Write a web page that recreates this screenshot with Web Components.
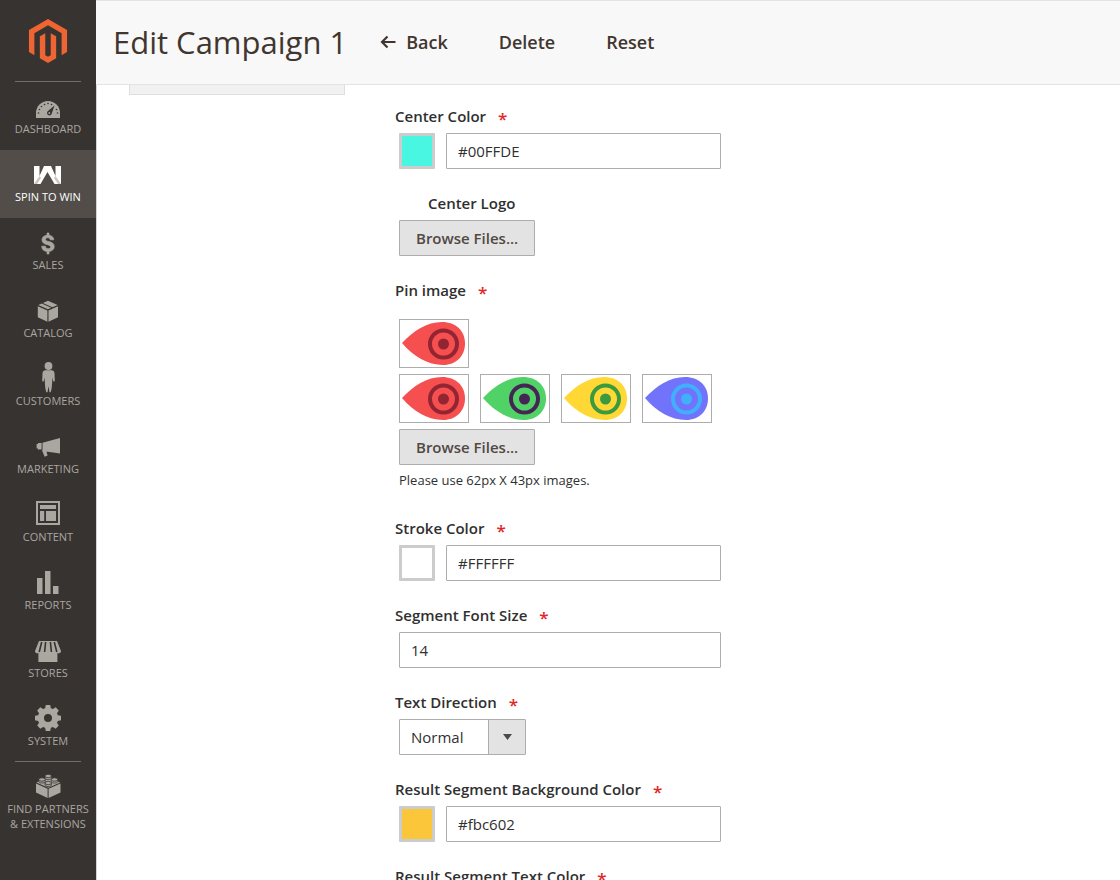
<!DOCTYPE html>
<html lang="en">
<head>
<meta charset="utf-8">
<meta name="viewport" content="width=device-width, initial-scale=1">
<title>Edit Campaign 1</title>
<style>
  body {
    margin: 0;
    font-family: "Open Sans", "Noto Sans", sans-serif;
    font-size: 15px;
    color: #303030;
    background: #fff;
  }
</style>
</head>
<body>

<admin-page>
  <admin-menu slot="menu">
    <menu-item icon="dashboard">Dashboard</menu-item>
    <menu-item icon="win" active>Spin to Win</menu-item>
    <menu-item icon="sales">Sales</menu-item>
    <menu-item icon="catalog">Catalog</menu-item>
    <menu-item icon="customers">Customers</menu-item>
    <menu-item icon="marketing">Marketing</menu-item>
    <menu-item icon="content">Content</menu-item>
    <menu-item icon="reports">Reports</menu-item>
    <menu-item icon="stores">Stores</menu-item>
    <menu-item icon="system">System</menu-item>
    <menu-item icon="partners" divided>Find Partners<br>&amp; Extensions</menu-item>
  </admin-menu>

  <page-header slot="header" heading="Edit Campaign 1">
    <header-action icon="back">Back</header-action>
    <header-action>Delete</header-action>
    <header-action>Reset</header-action>
  </page-header>

  <tab-panel slot="tabs"></tab-panel>

  <color-field label="Center Color" required value="#00FFDE" swatch="#48f6e1"></color-field>
  <file-field label="Center Logo" inset></file-field>
  <pin-field label="Pin image" required note="Please use 62px X 43px images."></pin-field>
  <color-field label="Stroke Color" required value="#FFFFFF" swatch="#ffffff"></color-field>
  <text-field label="Segment Font Size" required value="14"></text-field>
  <select-field label="Text Direction" required options="Normal,Reversed"></select-field>
  <color-field label="Result Segment Background Color" required value="#fbc602" swatch="#fbc639"></color-field>
  <color-field label="Result Segment Text Color" required value="#000000" swatch="#000000"></color-field>
</admin-page>

<script>
const ICONS = {
  dashboard: `
    <path d="M3 28v-5a12 12 0 0 1 24 0v5z"/>
    <g fill="#373330">
      <circle cx="5.500" cy="23" r="0.800"/><circle cx="6.500" cy="19.500" r="0.800"/>
      <circle cx="8.500" cy="16.500" r="0.800"/><circle cx="11.500" cy="14.500" r="0.800"/>
      <circle cx="15" cy="13.500" r="0.800"/><circle cx="18.500" cy="14.500" r="0.800"/>
      <circle cx="23.500" cy="19.500" r="0.800"/><circle cx="24.500" cy="23" r="0.800"/>
      <path d="M21.500 15.500l-2.800 8.200a2.400 2.400 0 1 1-4-2.400z"/>
    </g>
    <circle cx="16.300" cy="23" r="0.900"/>`,
  win: `
    <path d="M1 8h5.500v10L11 8h7l4.500 10V8H28v18h-6.500l-7-12-7 12H1z"/>
    <path d="M6.500 18L1 26h3l4-6zM22.500 18l5.500 8h-3l-4-6z" fill="#c9c6c3"/>`,
  sales: `
    <path d="M14 7h2v2.200c2.800.4 4.600 2 4.800 4.600h-3.600c-.3-1.400-1-2-2.500-2-1.400 0-2.200.6-2.200 1.600 0 1.100.8 1.500 3.200 2.100 3.700.9 5.500 2.200 5.500 5.100 0 2.800-1.900 4.500-5.200 4.900V28h-2v-2.500c-3.300-.4-5.200-2.200-5.300-5.300h3.700c.2 1.700 1.100 2.500 2.800 2.500 1.500 0 2.400-.6 2.400-1.700s-.7-1.600-3-2.200c-3.800-.9-5.600-2.200-5.600-5 0-2.500 1.900-4.200 5-4.600z" stroke="currentColor" stroke-width="0.700"/>`,
  catalog: `
    <path d="M4.800 12.200l9.600 4.200v11.400l-9.600-4.500z"/>
    <path d="M25 12.200l-9.500 4.200v11.400l9.500-4.500z"/>
    <path d="M5.300 11l3.400-1.500 9.500 4.200-3.300 1.500zM9.900 9l5.100-2.300 9.600 4.300-5.100 2.200z"/>`,
  customers: `
    <circle cx="15.500" cy="4" r="3.900"/>
    <path d="M12.500 8.300h6c1.800 0 2.800 1.200 3 3l.3 7.500c0 1-1.400 1.100-1.600.1l-.7-3.300-.8 10.600-1 4h-1.200l-1-6-1 6h-1.200l-1-4-.8-10.600-.7 3.300c-.2 1-1.600.9-1.600-.1l.3-7.500c.2-1.800 1.200-3 3-3z"/>`,
  marketing: `
    <path d="M27 8v15.500l-17.500-2.600v-8.200zM8.600 12.900v6.700H5v-1H3.600v-4.600H5v-1zM9 20.500l4.400.7 1.200 4.200-2.900 1.300z"/>`,
  content: `
    <path fill-rule="evenodd" d="M3 3h24v24H3zM5 5v20h20V5z"/>
    <path d="M7 7h16v4H7zM7 13h4.200v10H7zM13 13h10v10H13z"/>`,
  reports: `<path d="M4 12h5.500v16H4zM12 5h5.500v23H12zM20 20h5.500v8H20z"/>`,
  stores: `
    <path d="M6 7h18l4 10c0 2-2 2.800-3.600 2V28h-19v-9C4 19.800 2 19 2 17z"/>
    <path d="M8.700 8l-2.500 10M12.600 8l-1 10M17.400 8l1 10M21.300 8l2.500 10" stroke="#373330" stroke-width="1.600" fill="none"/>`,
  system: `
    <path fill-rule="evenodd" d="M12.800 3h4.400l.7 3.200 2 .8 2.800-1.700 3.100 3.100L24 11.200l.8 2 3.200.6v4.400l-3.200.7-.8 2 1.800 2.700-3.100 3.100L19.900 25l-2 .8-.7 3.200h-4.400l-.7-3.200-2-.8-2.800 1.700-3.100-3.100L6 20.900l-.8-2L2 18.200v-4.400l3.200-.6.8-2-1.800-2.800 3.100-3.100L10.100 7l2-.8zM15 12a4 4 0 1 0 0 8 4 4 0 0 0 0-8z"/>`,
  partners: `
    <path d="M3 13.500l11.600 5.200v9.300L3 22.500zM27.500 13.500L15.600 18.700V28l11.900-5.500z"/>
    <path d="M3.500 12.400L15.200 7l12 5.400-11.900 5.400z"/>
    <g stroke="#373330" stroke-width="0.800">
      <path d="M12 6v2c0 2 6.400 2 6.400 0V6z"/><ellipse cx="15.200" cy="6" rx="3.200" ry="1.700"/>
      <path d="M5.800 9.500v2c0 2 6.400 2 6.400 0v-2z"/><ellipse cx="9" cy="9.500" rx="3.200" ry="1.700"/>
      <path d="M18.300 9.500v2c0 2 6.400 2 6.400 0v-2z"/><ellipse cx="21.500" cy="9.500" rx="3.200" ry="1.700"/>
      <path d="M12 13v2c0 2 6.400 2 6.400 0v-2z"/><ellipse cx="15.200" cy="13" rx="3.200" ry="1.700"/>
    </g>`
};

// Page frame: menu on the left, header on top, tabs beside the form
class AdminPage extends HTMLElement {
  constructor() {
    super();
    this.attachShadow({ mode: "open" }).innerHTML = `
      <style>
        :host {
          display: grid;
          grid-template-columns: 96px minmax(0, 1fr);
          height: 100vh;
        }
        .page {
          display: flex;
          flex-direction: column;
          min-width: 0;
          min-height: 0;
        }
        main {
          flex: 1;
          min-height: 0;
          overflow-y: auto;
          scrollbar-width: none;
          display: grid;
          grid-template-columns: 216px minmax(0, 326px);
          gap: 50px;
          padding: 0 32px;
          border-left: 1px solid #d6d4d2;
          box-sizing: border-box;
          align-items: start;
        }
        form {
          display: flex;
          flex-direction: column;
          gap: 24px;
          padding: 21px 0 24px;
        }
      </style>
      <slot name="menu"></slot>
      <div class="page">
        <slot name="header"></slot>
        <main>
          <slot name="tabs"></slot>
          <form><slot></slot></form>
        </main>
      </div>
    `;
  }
}

class AdminMenu extends HTMLElement {
  constructor() {
    super();
    this.attachShadow({ mode: "open" }).innerHTML = `
      <style>
        :host {
          display: block;
          background: #373330;
          overflow: hidden;
        }
        .logo {
          display: flex;
          justify-content: center;
          padding: 19px 0 18px;
          margin: 0 15px;
          border-bottom: 1px solid #736d67;
        }
        svg { display: block; fill: #ee6432; }
        nav { display: flex; flex-direction: column; }
      </style>
      <a class="logo" href="#" aria-label="Magento">
        <svg width="44" height="44" viewBox="0 0 24 24">
          <path d="M12 24l-4.455-2.572v-12l2.970-1.715v12.001l1.485.902 1.485-.902V7.713l2.971 1.715v12L12 24zM22.391 6v12l-2.969 1.714V7.713L12 3.430 4.574 7.713v12.001L1.609 18V6L12 0l10.391 6z"/>
        </svg>
      </a>
      <nav><slot></slot></nav>
    `;
  }
}

class MenuItem extends HTMLElement {
  constructor() {
    super();
    this.attachShadow({ mode: "open" }).innerHTML = `
      <style>
        :host { display: block; }
        a {
          display: flex;
          flex-direction: column;
          align-items: center;
          min-height: 68px;
          padding-top: 8px;
          box-sizing: border-box;
          color: #aaa6a0;
          font-size: 11px;
          line-height: 15px;
          text-align: center;
          text-decoration: none;
          text-transform: uppercase;
          white-space: nowrap;
        }
        svg { display: block; fill: currentColor; overflow: visible; }
        span { margin-top: 1px; }
        :host([active]) a { background: #524d49; color: #fff; }
        :host([divided])::before {
          content: "";
          display: block;
          height: 1px;
          margin: -1px 15px 0;
          background: #736d67;
        }
      </style>
      <a href="#">
        <svg width="30" height="30" viewBox="0 0 30 30" aria-hidden="true">${ICONS[this.getAttribute("icon")]}</svg>
        <span><slot></slot></span>
      </a>
    `;
  }
}

class PageHeader extends HTMLElement {
  constructor() {
    super();
    this.attachShadow({ mode: "open" }).innerHTML = `
      <style>
        :host {
          display: flex;
          align-items: center;
          gap: 33px;
          height: 85px;
          flex: none;
          box-sizing: border-box;
          padding: 0 17px 2px;
          background: #f8f8f8;
          border-top: 1px solid #e3e3e3;
          border-bottom: 1px solid #e3e3e3;
        }
        h1 {
          margin: 0;
          font-size: 31px;
          font-weight: 400;
          line-height: 42px;
          color: #41362f;
        }
        .actions { display: flex; gap: 51px; }
      </style>
      <h1>${this.getAttribute("heading")}</h1>
      <div class="actions"><slot></slot></div>
    `;
  }
}

class HeaderAction extends HTMLElement {
  constructor() {
    super();
    const arrow = `
      <svg width="16" height="14" viewBox="0 0 16 14" aria-hidden="true">
        <path d="M15.500 7H2M7.500 1.500L2 7l5.500 5.500" fill="none" stroke="currentColor" stroke-width="2.200"/>
      </svg>`;
    this.attachShadow({ mode: "open" }).innerHTML = `
      <style>
        :host { display: block; }
        button {
          display: flex;
          align-items: center;
          gap: 10px;
          padding: 0;
          border: 0;
          background: none;
          color: #41362f;
          font: 600 18px/24px "Open Sans", sans-serif;
          cursor: pointer;
        }
      </style>
      <button type="button">${this.getAttribute("icon") === "back" ? arrow : ""}<span><slot></slot></span></button>
    `;
  }
}

class TabPanel extends HTMLElement {
  constructor() {
    super();
    this.attachShadow({ mode: "open" }).innerHTML = `
      <style>
        :host {
          display: block;
          height: 10px;
          box-sizing: border-box;
          background: #f1f1f1;
          border: 1px solid #dfdfdf;
          border-top: 0;
        }
      </style>
    `;
  }
}

// Shared label and control styles; each field type supplies control()
class BaseField extends HTMLElement {
  constructor() {
    super();
    const required = this.hasAttribute("required");
    this.attachShadow({ mode: "open" }).innerHTML = `
      <style>
        :host { display: block; }
        .label {
          display: flex;
          gap: 12px;
          margin-bottom: 7px;
          font-size: 15px;
          font-weight: 600;
          line-height: 20px;
          white-space: nowrap;
        }
        :host([inset]) .label { padding-left: 33px; }
        .star { color: #e22626; font-size: 17px; line-height: 26px; height: 20px; }
        .control {
          display: flex;
          gap: 11px;
          padding-left: 4px;
        }
        input, select, button {
          box-sizing: border-box;
          height: 36px;
          margin: 0;
          border: 1px solid #adadad;
          border-radius: 1px;
          color: #303030;
          font: 400 15px/20px "Open Sans", sans-serif;
        }
        input[type="text"] {
          flex: 1;
          min-width: 0;
          padding: 0 11px;
          background: #fff;
        }
        button {
          padding: 0 16px;
          background: #e3e3e3;
          color: #514943;
          font-weight: 600;
          cursor: pointer;
        }
        ${this.styles()}
      </style>
      <label class="label" for="control">
        <span>${this.getAttribute("label")}</span>
        ${required ? `<span class="star">*</span>` : ""}
      </label>
      <div class="control">${this.control()}</div>
    `;
  }

  styles() {
    return "";
  }
}

class TextField extends BaseField {
  control() {
    return `<input id="control" type="text" value="${this.getAttribute("value")}">`;
  }
}

class ColorField extends BaseField {
  styles() {
    return `
      input[type="color"] {
        appearance: none;
        width: 36px;
        padding: 0;
        border: 3px solid #ccc;
        background: none;
      }
      input[type="color"]::-webkit-color-swatch-wrapper { padding: 0; }
      input[type="color"]::-webkit-color-swatch { border: 0; border-radius: 0; }
    `;
  }

  control() {
    return `
      <input type="color" aria-label="Pick a color" value="${this.getAttribute("swatch")}">
      <input id="control" type="text" value="${this.getAttribute("value")}">
    `;
  }
}

class FileField extends BaseField {
  control() {
    return `<button id="control" type="button">Browse Files...</button>`;
  }
}

class SelectField extends BaseField {
  styles() {
    return `
      .select { position: relative; width: 127px; }
      select {
        appearance: none;
        width: 100%;
        padding: 0 38px 0 11px;
        background: linear-gradient(to right, #adadad 1px, #e3e3e3 1px) right / 37px 100% no-repeat #fff;
      }
      svg {
        position: absolute;
        right: 14px;
        top: 15px;
        fill: #514943;
        pointer-events: none;
      }
    `;
  }

  control() {
    const options = this.getAttribute("options").split(",");
    return `
      <div class="select">
        <select id="control">${options.map((o) => `<option>${o}</option>`).join("")}</select>
        <svg width="9" height="6" viewBox="0 0 9 6" aria-hidden="true"><path d="M0 0h9L4.500 6z"/></svg>
      </div>
    `;
  }
}

class PinField extends BaseField {
  styles() {
    return `
      .control { flex-direction: column; align-items: flex-start; gap: 6px; padding-top: 12px; }
      .pins { display: flex; gap: 11px; }
      .note { margin: 0 0 5px; font-size: 13px; line-height: 18px; }
    `;
  }

  control() {
    return `
      <pin-image body="#f54f4f" ring="#932432"></pin-image>
      <div class="pins">
        <pin-image body="#f54f4f" ring="#932432"></pin-image>
        <pin-image body="#51d267" ring="#442554"></pin-image>
        <pin-image body="#ffd836" ring="#3b9a3e"></pin-image>
        <pin-image body="#7174fa" ring="#40b0fc"></pin-image>
      </div>
      <button id="control" type="button">Browse Files...</button>
      <p class="note">${this.getAttribute("note")}</p>
    `;
  }
}

class PinImage extends HTMLElement {
  connectedCallback() {
    const body = this.getAttribute("body");
    const ring = this.getAttribute("ring");
    this.attachShadow({ mode: "open" }).innerHTML = `
      <style>
        :host {
          display: block;
          padding: 2px;
          border: 1px solid #adadad;
          background: #fff;
        }
        svg { display: block; }
      </style>
      <svg width="64" height="43" viewBox="0 0 64 43">
        <path d="M0 21C11 9 25 0 40 0c14 0 23 9 23 21.500S54 43 41 43C26 43 11 34 0 21z" fill="${body}"/>
        <circle cx="41.500" cy="22" r="13.500" fill="none" stroke="${ring}" stroke-width="4"/>
        <circle cx="41.500" cy="22" r="5.500" fill="${ring}"/>
      </svg>
    `;
  }
}

customElements.define("pin-image", PinImage);
customElements.define("text-field", TextField);
customElements.define("color-field", ColorField);
customElements.define("file-field", FileField);
customElements.define("select-field", SelectField);
customElements.define("pin-field", PinField);
customElements.define("tab-panel", TabPanel);
customElements.define("header-action", HeaderAction);
customElements.define("page-header", PageHeader);
customElements.define("menu-item", MenuItem);
customElements.define("admin-menu", AdminMenu);
customElements.define("admin-page", AdminPage);
</script>
</body>
</html>
